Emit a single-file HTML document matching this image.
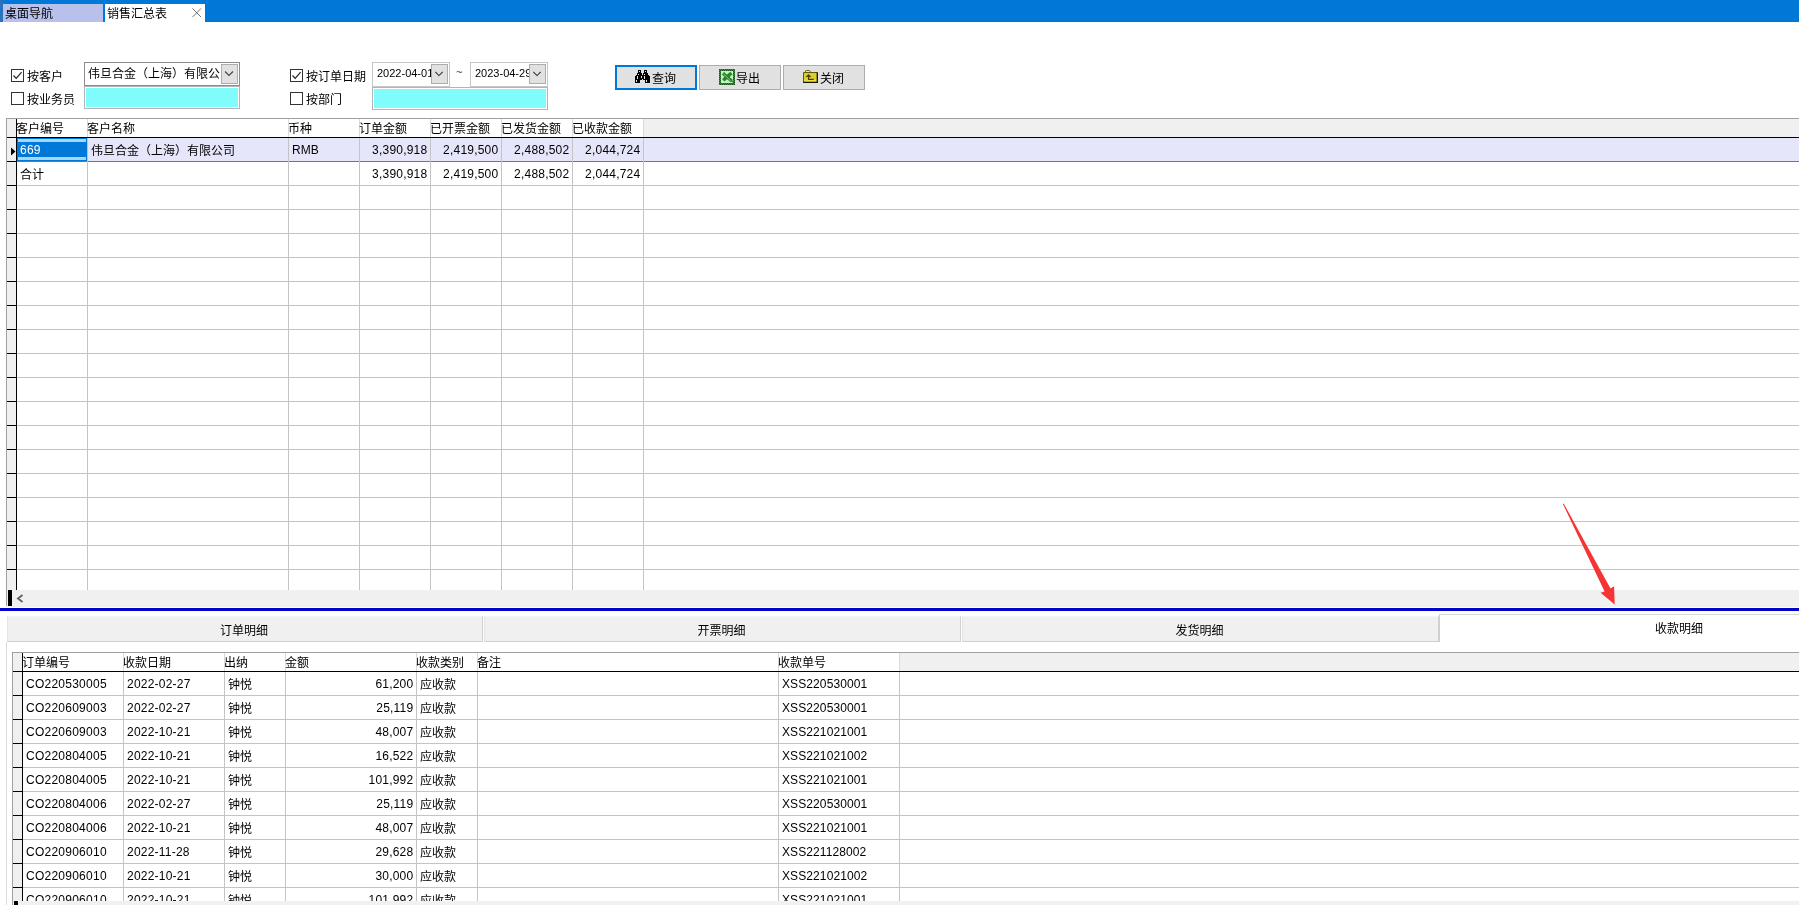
<!DOCTYPE html>
<html lang="zh-CN"><head><meta charset="utf-8"><title>销售汇总表</title>
<style>
html,body{margin:0;padding:0;}
body{width:1799px;height:905px;overflow:hidden;background:#fff;position:relative;
font-family:"Liberation Sans","Noto Sans CJK SC",sans-serif;font-size:12px;color:#000;}
.a{position:absolute;}
.t{position:absolute;white-space:nowrap;line-height:14px;height:14px;font-size:12px;}
.r{text-align:right;}
.hl{position:absolute;height:1px;background:#c4c4c4;}
.vl{position:absolute;width:1px;background:#c4c4c4;}
.bk{background:#000;}
.cb{position:absolute;width:11px;height:11px;border:1px solid #333;background:#fff;}
.btn{position:absolute;box-sizing:border-box;background:#e1e1e1;border:1px solid #adadad;height:25px;}
.dd{position:absolute;box-sizing:border-box;background:#e1e1e1;border:1px solid #adadad;}
.tab{position:absolute;box-sizing:border-box;background:#f0f0f0;border:1px solid #d0d0d0;border-top-color:#f4f4f4;border-left-color:#e4e4e4;height:26px;text-align:center;line-height:29px;font-size:12px;}
</style></head><body>
<div class="a" style="left:0;top:0;width:1799px;height:905px;overflow:hidden;will-change:transform">

<div class="a" style="left:0;top:0;width:1799px;height:22px;background:#0078d7"></div>
<div class="a" style="left:0;top:21px;width:1799px;height:1px;background:#1a6cbc"></div>
<div class="a" style="left:0;top:0;width:3px;height:22px;background:#2b72bc"></div>
<div class="a" style="left:3px;top:4px;width:100px;height:18px;background:#b8c0ec"></div>
<div class="t" style="left:5px;top:7px">桌面导航</div>
<div class="a" style="left:105px;top:4px;width:100px;height:18px;background:#fff"></div>
<div class="t" style="left:107px;top:7px">销售汇总表</div>
<svg class="a" style="left:191px;top:7px" width="12" height="12" viewBox="0 0 12 12"><path d="M1.5 1.5 L10 10 M10 1.5 L1.5 10" stroke="#707070" stroke-width="1" fill="none"/></svg>
<div class="cb" style="left:11px;top:69px"></div>
<svg class="a" style="left:11px;top:69px" width="13" height="13" viewBox="0 0 13 13"><path d="M2.5 6.5 L5.2 9.3 L10.6 3.2" stroke="#222" stroke-width="1.2" fill="none"/></svg>
<div class="t" style="left:27px;top:70px">按客户</div>
<div class="cb" style="left:11px;top:92px"></div>
<div class="t" style="left:27px;top:93px">按业务员</div>
<div class="cb" style="left:290px;top:69px"></div>
<svg class="a" style="left:290px;top:69px" width="13" height="13" viewBox="0 0 13 13"><path d="M2.5 6.5 L5.2 9.3 L10.6 3.2" stroke="#222" stroke-width="1.2" fill="none"/></svg>
<div class="t" style="left:306px;top:70px">按订单日期</div>
<div class="cb" style="left:290px;top:92px"></div>
<div class="t" style="left:306px;top:93px">按部门</div>
<div class="a" style="left:84px;top:62px;width:154px;height:22px;border:1px solid #8c8c8c;background:#fff"></div>
<div class="t" style="left:88px;top:67px;width:133px;overflow:hidden">伟旦合金（上海）有限公司</div>
<div class="dd" style="left:221px;top:64px;width:17px;height:20px"></div>
<svg class="a" style="left:223px;top:70px" width="12" height="8" viewBox="0 0 12 8"><path d="M2 1.5 L6 5.5 L10 1.5" stroke="#444" stroke-width="1.1" fill="none"/></svg>
<div class="a" style="left:84px;top:86px;width:152px;height:19px;border:1px solid #b4b4b4;padding:1px;background:#80fcfc;background-clip:content-box"></div>
<div class="a" style="left:372px;top:62px;width:76px;height:23px;border:1px solid #c6c6c6;background:#fff"></div>
<div class="t" style="left:377px;top:66px;width:54px;overflow:hidden;font-size:11px">2022-04-01</div>
<div class="dd" style="left:431px;top:64px;width:17px;height:20px"></div>
<svg class="a" style="left:433px;top:70px" width="12" height="8" viewBox="0 0 12 8"><path d="M2.3 1.8 L6 5.5 L9.7 1.8" stroke="#333" stroke-width="1.05" fill="none"/></svg>
<div class="t" style="left:456px;top:65px;font-size:11px;color:#333">~</div>
<div class="a" style="left:470px;top:62px;width:76px;height:23px;border:1px solid #c6c6c6;background:#fff"></div>
<div class="t" style="left:475px;top:66px;width:54px;overflow:hidden;font-size:11px">2023-04-29</div>
<div class="dd" style="left:529px;top:64px;width:17px;height:20px"></div>
<svg class="a" style="left:531px;top:70px" width="12" height="8" viewBox="0 0 12 8"><path d="M2.3 1.8 L6 5.5 L9.7 1.8" stroke="#333" stroke-width="1.05" fill="none"/></svg>
<div class="a" style="left:372px;top:87px;width:172px;height:19px;border:1px solid #b4b4b4;padding:1px;background:#80fcfc;background-clip:content-box"></div>
<div class="btn" style="left:615px;top:65px;width:82px;border:2px solid #0078d7"></div>
<div class="btn" style="left:699px;top:65px;width:82px"></div>
<div class="btn" style="left:783px;top:65px;width:82px"></div>
<svg class="a" style="left:635px;top:70px" width="15" height="13" viewBox="0 0 15 13" shape-rendering="crispEdges"><path d="M3 0h3v1h-3zM9 0h3v1h-3zM3 1h1v1h-1zM5 1h1v1h-1zM9 1h1v1h-1zM11 1h1v1h-1zM3 2h3v1h-3zM9 2h3v1h-3zM2 3h5v1h-5zM8 3h5v1h-5zM2 4h1v1h-1zM4 4h3v1h-3zM8 4h1v1h-1zM10 4h3v1h-3zM1 5h13v1h-13zM0 6h2v1h-2zM3 6h3v1h-3zM7 6h2v1h-2zM10 6h5v1h-5zM0 7h2v1h-2zM3 7h3v1h-3zM7 7h2v1h-2zM10 7h5v1h-5zM0 8h2v1h-2zM3 8h6v1h-6zM10 8h5v1h-5zM0 9h7v1h-7zM8 9h7v1h-7zM0 10h1v1h-1zM2 10h3v1h-3zM10 10h1v1h-1zM12 10h3v1h-3zM0 11h1v1h-1zM2 11h3v1h-3zM10 11h1v1h-1zM12 11h3v1h-3zM0 12h5v1h-5zM10 12h5v1h-5z" fill="#000"/></svg>
<div class="t" style="left:652px;top:72px">查询</div>
<svg class="a" style="left:719px;top:69px" width="16" height="16" viewBox="0 0 16 16">
<defs><pattern id="ck" width="2" height="2" patternUnits="userSpaceOnUse"><rect width="2" height="2" fill="#408c40"/><rect width="1" height="1" fill="#1a561a"/><rect x="1" y="1" width="1" height="1" fill="#1a561a"/></pattern></defs>
<rect x="0" y="0" width="16" height="16" fill="url(#ck)" shape-rendering="crispEdges"/>
<rect x="2" y="2" width="12" height="12" fill="#bdf7bd"/>
<path d="M4 4.2 L12.6 12" stroke="#2f7f2f" stroke-width="3.3" fill="none"/>
<path d="M12.4 4 L4.2 11.2" stroke="#2f7f2f" stroke-width="3.5" fill="none"/>
<path d="M12 11.6 L15 13.4" stroke="#2f7f2f" stroke-width="1.6" fill="none"/>
<path d="M4.6 5 L11.6 11.8" stroke="#8fd68f" stroke-width="0.9" fill="none"/>
</svg>
<div class="t" style="left:736px;top:72px">导出</div>
<svg class="a" style="left:803px;top:70px" width="15" height="13" viewBox="0 0 15 13">
<path d="M2.5 2.5 V1.2 Q2.5 0.5 3.3 0.5 H6.2 Q7 0.5 7.2 1.2 L7.5 2.5" fill="#eceb90" stroke="#6b6b10" stroke-width="1"/>
<rect x="0.5" y="2.5" width="13.5" height="10" fill="#dacd2e"/>
<rect x="1" y="9.5" width="13" height="2.5" fill="#ece63a" opacity="0.8"/>
<path d="M0.5 12.5 V2.5 H14" fill="none" stroke="#5a5a08" stroke-width="1"/>
<path d="M14.3 2.2 V12.5 H0.2" fill="none" stroke="#141400" stroke-width="1.3"/>
<path d="M5.5 3.9 L8.3 6.9 H2.7 Z" fill="#4a4200"/>
<path d="M5.6 6.5 V9.4 H10.8" fill="none" stroke="#4a4200" stroke-width="1.25"/>
</svg>
<div class="t" style="left:820px;top:72px">关闭</div>
<div class="a" style="left:6px;top:118px;width:1793px;height:1px;background:#a0a0a0"></div>
<div class="a" style="left:6px;top:118px;width:1px;height:488px;background:#a0a0a0"></div>
<div class="a" style="left:7px;top:119px;width:10px;height:471px;background:#f0f0f0"></div>
<div class="a" style="left:644px;top:119px;width:1155px;height:18px;background:#f0f0f0"></div>
<div class="a" style="left:17px;top:138px;width:1782px;height:23px;background:#e6e6fa"></div>
<div class="a" style="left:17px;top:138px;width:70px;height:23px;background:#0078d7"></div>
<div class="a" style="left:18px;top:139px;width:68px;height:3px;background:#a6d8ff"></div>
<div class="a" style="left:18px;top:157px;width:68px;height:3px;background:#a6d8ff"></div>
<div class="hl" style="left:17px;top:161px;width:1782px"></div>
<div class="hl bk" style="left:7px;top:161px;width:10px"></div>
<div class="hl" style="left:17px;top:185px;width:1782px"></div>
<div class="hl bk" style="left:7px;top:185px;width:10px"></div>
<div class="hl" style="left:17px;top:209px;width:1782px"></div>
<div class="hl bk" style="left:7px;top:209px;width:10px"></div>
<div class="hl" style="left:17px;top:233px;width:1782px"></div>
<div class="hl bk" style="left:7px;top:233px;width:10px"></div>
<div class="hl" style="left:17px;top:257px;width:1782px"></div>
<div class="hl bk" style="left:7px;top:257px;width:10px"></div>
<div class="hl" style="left:17px;top:281px;width:1782px"></div>
<div class="hl bk" style="left:7px;top:281px;width:10px"></div>
<div class="hl" style="left:17px;top:305px;width:1782px"></div>
<div class="hl bk" style="left:7px;top:305px;width:10px"></div>
<div class="hl" style="left:17px;top:329px;width:1782px"></div>
<div class="hl bk" style="left:7px;top:329px;width:10px"></div>
<div class="hl" style="left:17px;top:353px;width:1782px"></div>
<div class="hl bk" style="left:7px;top:353px;width:10px"></div>
<div class="hl" style="left:17px;top:377px;width:1782px"></div>
<div class="hl bk" style="left:7px;top:377px;width:10px"></div>
<div class="hl" style="left:17px;top:401px;width:1782px"></div>
<div class="hl bk" style="left:7px;top:401px;width:10px"></div>
<div class="hl" style="left:17px;top:425px;width:1782px"></div>
<div class="hl bk" style="left:7px;top:425px;width:10px"></div>
<div class="hl" style="left:17px;top:449px;width:1782px"></div>
<div class="hl bk" style="left:7px;top:449px;width:10px"></div>
<div class="hl" style="left:17px;top:473px;width:1782px"></div>
<div class="hl bk" style="left:7px;top:473px;width:10px"></div>
<div class="hl" style="left:17px;top:497px;width:1782px"></div>
<div class="hl bk" style="left:7px;top:497px;width:10px"></div>
<div class="hl" style="left:17px;top:521px;width:1782px"></div>
<div class="hl bk" style="left:7px;top:521px;width:10px"></div>
<div class="hl" style="left:17px;top:545px;width:1782px"></div>
<div class="hl bk" style="left:7px;top:545px;width:10px"></div>
<div class="hl" style="left:17px;top:569px;width:1782px"></div>
<div class="hl bk" style="left:7px;top:569px;width:10px"></div>
<div class="hl" style="left:17px;top:161px;width:1782px;background:#2a8ad8"></div>
<div class="vl" style="left:87px;top:119px;height:18px;background:#dadada"></div>
<div class="vl" style="left:87px;top:138px;height:452px"></div>
<div class="vl" style="left:288px;top:119px;height:18px;background:#dadada"></div>
<div class="vl" style="left:288px;top:138px;height:452px"></div>
<div class="vl" style="left:359px;top:119px;height:18px;background:#dadada"></div>
<div class="vl" style="left:359px;top:138px;height:452px"></div>
<div class="vl" style="left:430px;top:119px;height:18px;background:#dadada"></div>
<div class="vl" style="left:430px;top:138px;height:452px"></div>
<div class="vl" style="left:501px;top:119px;height:18px;background:#dadada"></div>
<div class="vl" style="left:501px;top:138px;height:452px"></div>
<div class="vl" style="left:572px;top:119px;height:18px;background:#dadada"></div>
<div class="vl" style="left:572px;top:138px;height:452px"></div>
<div class="vl" style="left:643px;top:119px;height:18px;background:#dadada"></div>
<div class="vl" style="left:643px;top:138px;height:452px"></div>
<div class="a bk" style="left:7px;top:137px;width:1792px;height:1px"></div>
<div class="a bk" style="left:16px;top:119px;width:1px;height:471px"></div>
<div class="t" style="left:16px;top:122px">客户编号</div>
<div class="t" style="left:87px;top:122px">客户名称</div>
<div class="t" style="left:288px;top:122px">币种</div>
<div class="t" style="left:359px;top:122px">订单金额</div>
<div class="t" style="left:430px;top:122px">已开票金额</div>
<div class="t" style="left:501px;top:122px">已发货金额</div>
<div class="t" style="left:572px;top:122px">已收款金额</div>
<svg class="a" style="left:10px;top:147px" width="6" height="9" viewBox="0 0 6 9"><path d="M1 0.5 L5.5 4.5 L1 8.5 Z" fill="#000"/></svg>
<div class="t" style="left:20px;top:143px;color:#fff;letter-spacing:0.25px">669</div>
<div class="t" style="left:91px;top:144px">伟旦合金（上海）有限公司</div>
<div class="t" style="left:292px;top:143px">RMB</div>
<div class="t r" style="left:357px;width:70px;top:143px;letter-spacing:0.2px;margin-left:0.3px">3,390,918</div>
<div class="t r" style="left:357px;width:70px;top:167px;letter-spacing:0.2px;margin-left:0.3px">3,390,918</div>
<div class="t r" style="left:428px;width:70px;top:143px;letter-spacing:0.2px;margin-left:0.3px">2,419,500</div>
<div class="t r" style="left:428px;width:70px;top:167px;letter-spacing:0.2px;margin-left:0.3px">2,419,500</div>
<div class="t r" style="left:499px;width:70px;top:143px;letter-spacing:0.2px;margin-left:0.3px">2,488,502</div>
<div class="t r" style="left:499px;width:70px;top:167px;letter-spacing:0.2px;margin-left:0.3px">2,488,502</div>
<div class="t r" style="left:570px;width:70px;top:143px;letter-spacing:0.2px;margin-left:0.3px">2,044,724</div>
<div class="t r" style="left:570px;width:70px;top:167px;letter-spacing:0.2px;margin-left:0.3px">2,044,724</div>
<div class="t" style="left:20px;top:168px">合计</div>
<div class="a" style="left:7px;top:590px;width:1792px;height:17px;background:#f0f0f0"></div>
<div class="a bk" style="left:8px;top:590px;width:4px;height:16px"></div>
<svg class="a" style="left:16px;top:594px" width="8" height="9" viewBox="0 0 8 9"><path d="M6.5 1 L2 4.5 L6.5 8" stroke="#606060" stroke-width="1.8" fill="none"/></svg>
<div class="a" style="left:0;top:608px;width:1799px;height:3px;background:#0404c8"></div>
<div class="tab" style="left:7px;top:616px;width:476px;padding-right:2px">订单明细</div>
<div class="tab" style="left:484px;top:616px;width:477px;padding-right:2px">开票明细</div>
<div class="tab" style="left:962px;top:616px;width:477px;padding-right:2px">发货明细</div>
<div class="tab" style="left:1439px;top:614px;width:480px;height:28px;background:#fff;border-color:#d8d8d2 #d0d0d0;border-bottom:none;line-height:28px">收款明细</div>
<div class="a" style="left:6px;top:642px;width:1px;height:263px;background:#dcdcdc"></div>
<div class="a" style="left:12px;top:652px;width:1787px;height:1px;background:#a0a0a0"></div>
<div class="a" style="left:12px;top:652px;width:1px;height:253px;background:#a0a0a0"></div>
<div class="a" style="left:13px;top:653px;width:9px;height:253px;background:#f0f0f0"></div>
<div class="a" style="left:900px;top:653px;width:899px;height:18px;background:#f0f0f0"></div>
<div class="hl" style="left:23px;top:695px;width:1776px"></div>
<div class="hl bk" style="left:13px;top:695px;width:10px"></div>
<div class="hl" style="left:23px;top:719px;width:1776px"></div>
<div class="hl bk" style="left:13px;top:719px;width:10px"></div>
<div class="hl" style="left:23px;top:743px;width:1776px"></div>
<div class="hl bk" style="left:13px;top:743px;width:10px"></div>
<div class="hl" style="left:23px;top:767px;width:1776px"></div>
<div class="hl bk" style="left:13px;top:767px;width:10px"></div>
<div class="hl" style="left:23px;top:791px;width:1776px"></div>
<div class="hl bk" style="left:13px;top:791px;width:10px"></div>
<div class="hl" style="left:23px;top:815px;width:1776px"></div>
<div class="hl bk" style="left:13px;top:815px;width:10px"></div>
<div class="hl" style="left:23px;top:839px;width:1776px"></div>
<div class="hl bk" style="left:13px;top:839px;width:10px"></div>
<div class="hl" style="left:23px;top:863px;width:1776px"></div>
<div class="hl bk" style="left:13px;top:863px;width:10px"></div>
<div class="hl" style="left:23px;top:887px;width:1776px"></div>
<div class="hl bk" style="left:13px;top:887px;width:10px"></div>
<div class="hl" style="left:23px;top:911px;width:1776px"></div>
<div class="hl bk" style="left:13px;top:911px;width:10px"></div>
<div class="vl" style="left:123px;top:653px;height:18px;background:#dadada"></div>
<div class="vl" style="left:123px;top:672px;height:233px"></div>
<div class="vl" style="left:224px;top:653px;height:18px;background:#dadada"></div>
<div class="vl" style="left:224px;top:672px;height:233px"></div>
<div class="vl" style="left:285px;top:653px;height:18px;background:#dadada"></div>
<div class="vl" style="left:285px;top:672px;height:233px"></div>
<div class="vl" style="left:416px;top:653px;height:18px;background:#dadada"></div>
<div class="vl" style="left:416px;top:672px;height:233px"></div>
<div class="vl" style="left:477px;top:653px;height:18px;background:#dadada"></div>
<div class="vl" style="left:477px;top:672px;height:233px"></div>
<div class="vl" style="left:778px;top:653px;height:18px;background:#dadada"></div>
<div class="vl" style="left:778px;top:672px;height:233px"></div>
<div class="vl" style="left:899px;top:653px;height:18px;background:#dadada"></div>
<div class="vl" style="left:899px;top:672px;height:233px"></div>
<div class="a bk" style="left:13px;top:671px;width:1786px;height:1px"></div>
<div class="a bk" style="left:22px;top:653px;width:1px;height:253px"></div>
<div class="t" style="left:22px;top:656px">订单编号</div>
<div class="t" style="left:123px;top:656px">收款日期</div>
<div class="t" style="left:224px;top:656px">出纳</div>
<div class="t" style="left:285px;top:656px">金额</div>
<div class="t" style="left:416px;top:656px">收款类别</div>
<div class="t" style="left:477px;top:656px">备注</div>
<div class="t" style="left:778px;top:656px">收款单号</div>
<div class="t" style="left:26px;top:677px;letter-spacing:0.25px">CO220530005</div>
<div class="t" style="left:127px;top:677px;letter-spacing:0.22px">2022-02-27</div>
<div class="t" style="left:228px;top:678px">钟悦</div>
<div class="t r" style="left:313px;width:100px;top:677px;letter-spacing:0.2px;margin-left:0.3px">61,200</div>
<div class="t" style="left:420px;top:678px">应收款</div>
<div class="t" style="left:782px;top:677px;letter-spacing:0.1px">XSS220530001</div>
<div class="t" style="left:26px;top:701px;letter-spacing:0.25px">CO220609003</div>
<div class="t" style="left:127px;top:701px;letter-spacing:0.22px">2022-02-27</div>
<div class="t" style="left:228px;top:702px">钟悦</div>
<div class="t r" style="left:313px;width:100px;top:701px;letter-spacing:0.2px;margin-left:0.3px">25,119</div>
<div class="t" style="left:420px;top:702px">应收款</div>
<div class="t" style="left:782px;top:701px;letter-spacing:0.1px">XSS220530001</div>
<div class="t" style="left:26px;top:725px;letter-spacing:0.25px">CO220609003</div>
<div class="t" style="left:127px;top:725px;letter-spacing:0.22px">2022-10-21</div>
<div class="t" style="left:228px;top:726px">钟悦</div>
<div class="t r" style="left:313px;width:100px;top:725px;letter-spacing:0.2px;margin-left:0.3px">48,007</div>
<div class="t" style="left:420px;top:726px">应收款</div>
<div class="t" style="left:782px;top:725px;letter-spacing:0.1px">XSS221021001</div>
<div class="t" style="left:26px;top:749px;letter-spacing:0.25px">CO220804005</div>
<div class="t" style="left:127px;top:749px;letter-spacing:0.22px">2022-10-21</div>
<div class="t" style="left:228px;top:750px">钟悦</div>
<div class="t r" style="left:313px;width:100px;top:749px;letter-spacing:0.2px;margin-left:0.3px">16,522</div>
<div class="t" style="left:420px;top:750px">应收款</div>
<div class="t" style="left:782px;top:749px;letter-spacing:0.1px">XSS221021002</div>
<div class="t" style="left:26px;top:773px;letter-spacing:0.25px">CO220804005</div>
<div class="t" style="left:127px;top:773px;letter-spacing:0.22px">2022-10-21</div>
<div class="t" style="left:228px;top:774px">钟悦</div>
<div class="t r" style="left:313px;width:100px;top:773px;letter-spacing:0.2px;margin-left:0.3px">101,992</div>
<div class="t" style="left:420px;top:774px">应收款</div>
<div class="t" style="left:782px;top:773px;letter-spacing:0.1px">XSS221021001</div>
<div class="t" style="left:26px;top:797px;letter-spacing:0.25px">CO220804006</div>
<div class="t" style="left:127px;top:797px;letter-spacing:0.22px">2022-02-27</div>
<div class="t" style="left:228px;top:798px">钟悦</div>
<div class="t r" style="left:313px;width:100px;top:797px;letter-spacing:0.2px;margin-left:0.3px">25,119</div>
<div class="t" style="left:420px;top:798px">应收款</div>
<div class="t" style="left:782px;top:797px;letter-spacing:0.1px">XSS220530001</div>
<div class="t" style="left:26px;top:821px;letter-spacing:0.25px">CO220804006</div>
<div class="t" style="left:127px;top:821px;letter-spacing:0.22px">2022-10-21</div>
<div class="t" style="left:228px;top:822px">钟悦</div>
<div class="t r" style="left:313px;width:100px;top:821px;letter-spacing:0.2px;margin-left:0.3px">48,007</div>
<div class="t" style="left:420px;top:822px">应收款</div>
<div class="t" style="left:782px;top:821px;letter-spacing:0.1px">XSS221021001</div>
<div class="t" style="left:26px;top:845px;letter-spacing:0.25px">CO220906010</div>
<div class="t" style="left:127px;top:845px;letter-spacing:0.22px">2022-11-28</div>
<div class="t" style="left:228px;top:846px">钟悦</div>
<div class="t r" style="left:313px;width:100px;top:845px;letter-spacing:0.2px;margin-left:0.3px">29,628</div>
<div class="t" style="left:420px;top:846px">应收款</div>
<div class="t" style="left:782px;top:845px;letter-spacing:0.1px">XSS221128002</div>
<div class="t" style="left:26px;top:869px;letter-spacing:0.25px">CO220906010</div>
<div class="t" style="left:127px;top:869px;letter-spacing:0.22px">2022-10-21</div>
<div class="t" style="left:228px;top:870px">钟悦</div>
<div class="t r" style="left:313px;width:100px;top:869px;letter-spacing:0.2px;margin-left:0.3px">30,000</div>
<div class="t" style="left:420px;top:870px">应收款</div>
<div class="t" style="left:782px;top:869px;letter-spacing:0.1px">XSS221021002</div>
<div class="t" style="left:26px;top:893px;letter-spacing:0.25px">CO220906010</div>
<div class="t" style="left:127px;top:893px;letter-spacing:0.22px">2022-10-21</div>
<div class="t" style="left:228px;top:894px">钟悦</div>
<div class="t r" style="left:313px;width:100px;top:893px;letter-spacing:0.2px;margin-left:0.3px">101,992</div>
<div class="t" style="left:420px;top:894px">应收款</div>
<div class="t" style="left:782px;top:893px;letter-spacing:0.1px">XSS221021001</div>
<div class="a" style="left:13px;top:901px;width:1786px;height:4px;background:#f1f1f1"></div>
<div class="a bk" style="left:14px;top:901px;width:4px;height:4px"></div>
<svg class="a" style="left:1550px;top:495px" width="80" height="120" viewBox="1550 495 80 120">
<path d="M1563.7 503.4 L1610.5 588.4 L1614.1 586.2 L1614.7 604.4 L1600.6 592.8 L1604.6 591.5 L1562.9 504.0 Z" fill="#f53434"/>
</svg>
</div>
</body></html>
